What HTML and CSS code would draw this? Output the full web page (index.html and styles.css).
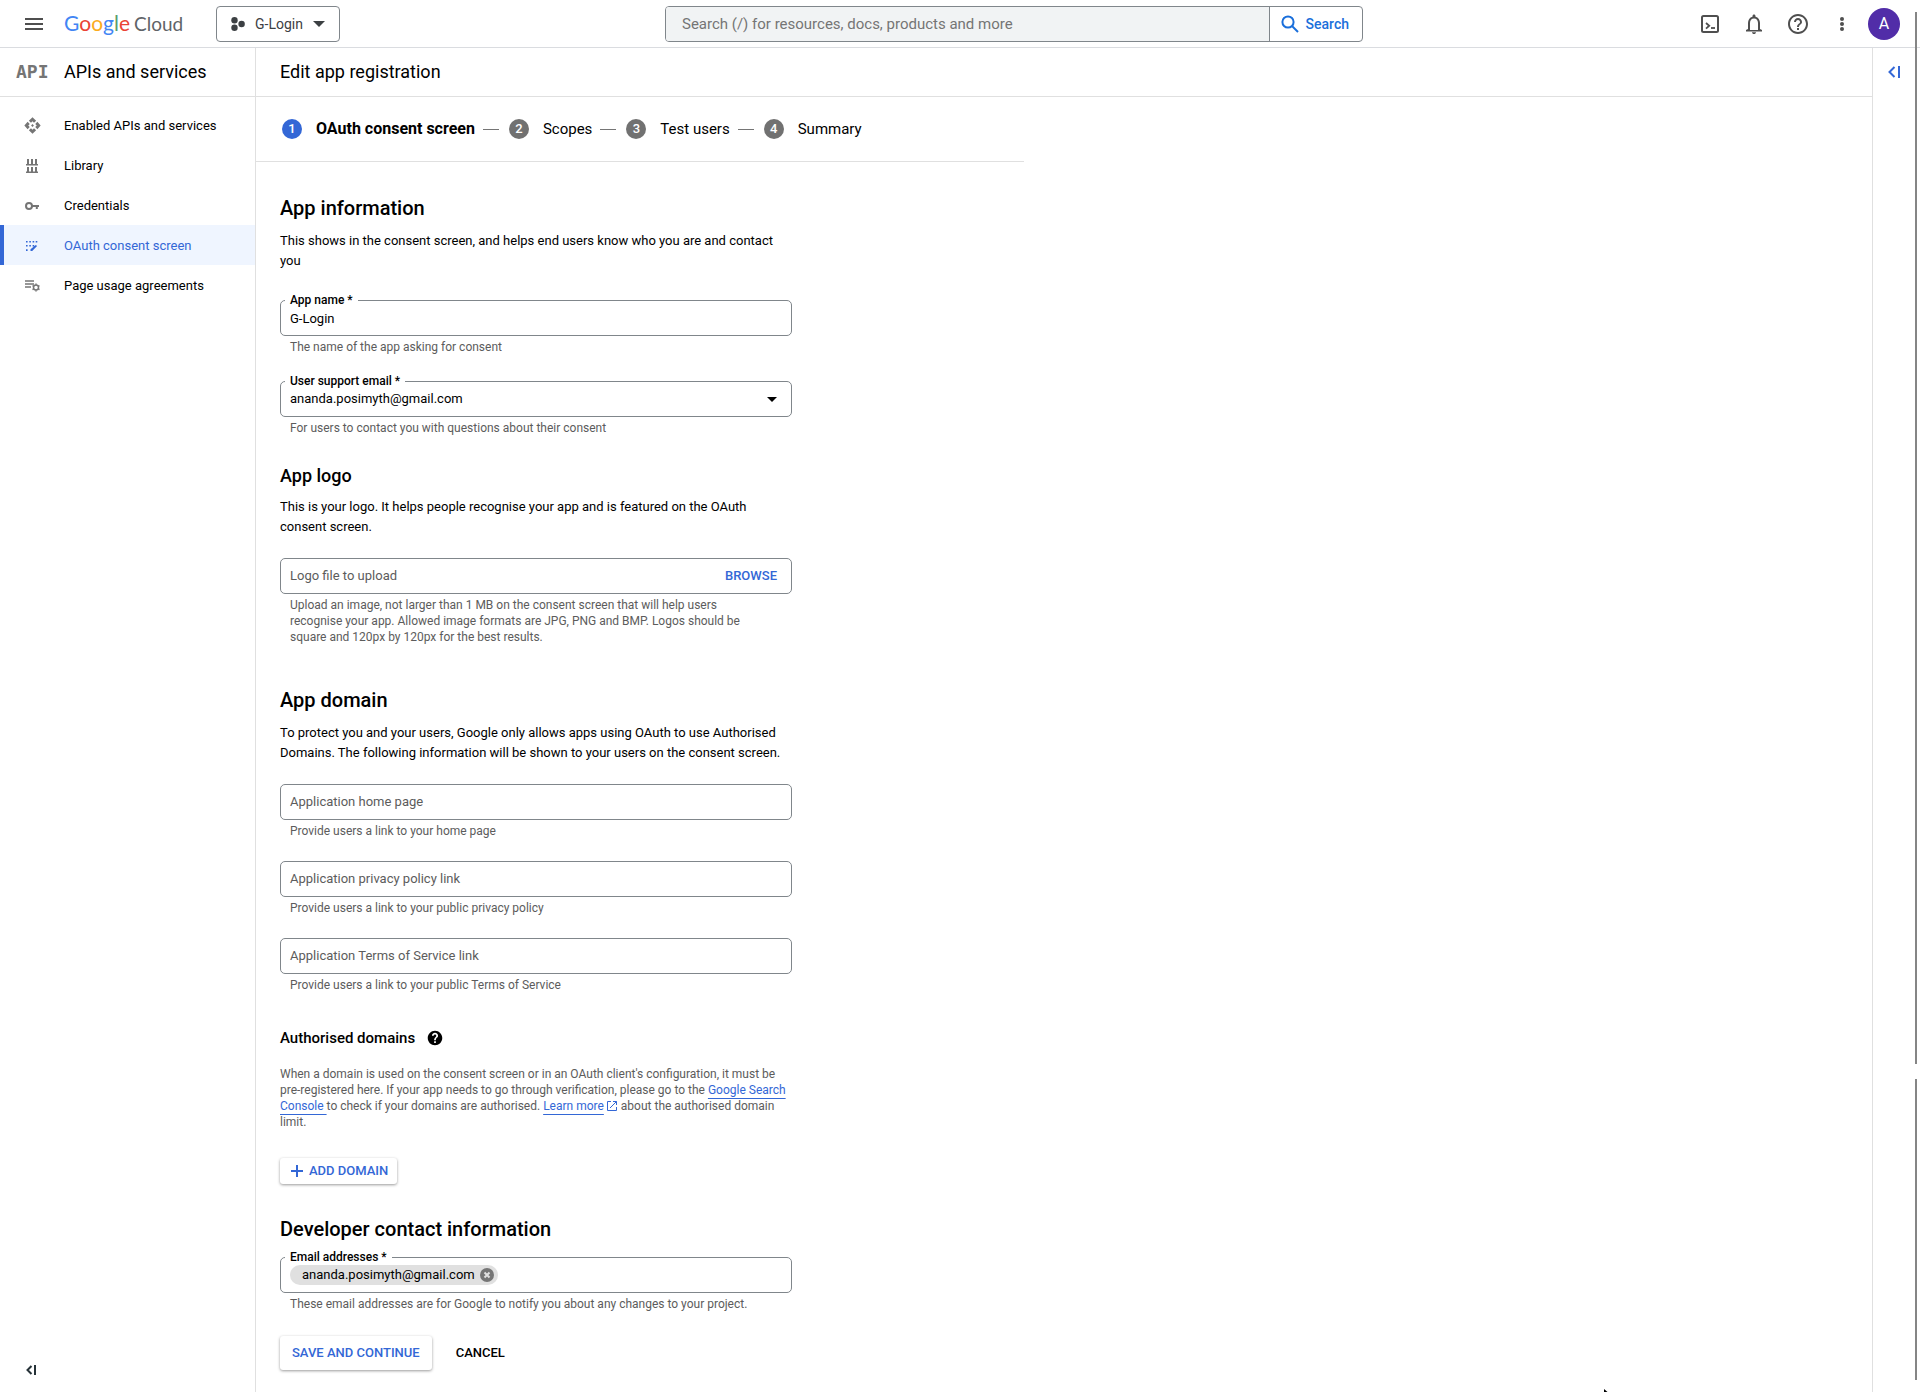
FILE: index.html
```html
<!DOCTYPE html>
<html lang="en-GB">
<head>
<meta charset="utf-8">
<meta name="viewport" content="width=device-width, initial-scale=1">
<title>Edit app registration – Google Cloud</title>
<link rel="stylesheet" href="styles.css">
</head>
<body>
<header class="topbar">
  <div class="topbar-left">
    <button class="icon-button" type="button" aria-label="Navigation menu">
      <svg width="18" height="12" viewBox="0 0 18 12" fill="currentColor"><path d="M0 0h18v2H0zM0 5h18v2H0zM0 10h18v2H0z"/></svg>
    </button>
    <a class="brand" href="#"><span class="brand-google"><span class="g-blue">G</span><span class="g-red">o</span><span class="g-yellow">o</span><span class="g-blue">g</span><span class="g-green">l</span><span class="g-red">e</span></span><span>Cloud</span></a>
    <button class="project" type="button">
      <svg width="14" height="14" viewBox="0 0 14 14" fill="currentColor"><circle cx="3.5" cy="3.2" r="3.2"/><circle cx="3.5" cy="10.8" r="3.2"/><circle cx="10.6" cy="7" r="3.2"/></svg>
      <span class="project-name">G-Login</span>
      <svg width="12" height="6" viewBox="0 0 12 6" fill="currentColor"><path d="M0 0h12L6 6z"/></svg>
    </button>
  </div>
  <form class="search" role="search">
    <input class="search-input" type="search" aria-label="Search" placeholder="Search (/) for resources, docs, products and more">
    <button class="search-button" type="button">
      <svg width="18" height="18" viewBox="0 0 18 18" fill="none" stroke="currentColor" stroke-width="2"><circle cx="7" cy="7" r="5.6"/><path d="M11 11l6 6"/></svg>
      Search
    </button>
  </form>
  <div class="topbar-right">
    <button class="icon-button" type="button" aria-label="Cloud Shell">
      <svg width="18" height="18" viewBox="0 0 18 18" fill="none" stroke="currentColor"><rect x="1" y="1" width="16" height="16" rx="1.5" stroke-width="2"/><path d="M5 8l3.2 2.8L5 13.600" stroke-width="1.800"/><path d="M10 13h4" stroke-width="1.800"/></svg>
    </button>
    <button class="icon-button" type="button" aria-label="Notifications">
      <svg width="24" height="24" viewBox="0 0 24 24" fill="currentColor"><path d="M18 17v-6c0-3.070-1.640-5.640-4.500-6.320V4c0-.83-.67-1.500-1.500-1.500s-1.500.67-1.500 1.500v.68C7.630 5.360 6 7.920 6 11v6l-2 1v1.500h16V18l-2-1zm-2 1H8v-7c0-2.480 1.510-4.500 4-4.500s4 2.020 4 4.500v7zM10 20.200h4c0 1-.9 1.800-2 1.800s-2-.8-2-1.800z"/></svg>
    </button>
    <button class="icon-button" type="button" aria-label="Help">
      <svg width="24" height="24" viewBox="0 0 24 24" fill="currentColor"><path d="M11 18h2v-2h-2v2zm1-16C6.480 2 2 6.480 2 12s4.480 10 10 10 10-4.480 10-10S17.520 2 12 2zm0 18c-4.410 0-8-3.590-8-8s3.590-8 8-8 8 3.590 8 8-3.590 8-8 8zm0-14c-2.210 0-4 1.790-4 4h2c0-1.100.9-2 2-2s2 .9 2 2c0 2-3 1.750-3 5h2c0-2.250 3-2.500 3-5 0-2.210-1.790-4-4-4z"/></svg>
    </button>
    <button class="icon-button" type="button" aria-label="More options">
      <svg width="4" height="14" viewBox="0 0 4 14" fill="currentColor"><circle cx="2" cy="2" r="2"/><circle cx="2" cy="7" r="2"/><circle cx="2" cy="12" r="2"/></svg>
    </button>
    <button class="avatar" type="button" aria-label="Account A">A</button>
  </div>
</header>

<div class="shell">
  <aside class="sidebar">
    <div class="section-bar sidebar-head">
      <span class="api-mark">API</span>
      <h2 class="bar-title">APIs and services</h2>
    </div>
    <nav class="nav">
      <a class="nav-item" href="#">
        <span class="nav-icon"><svg width="17" height="17" viewBox="0 0 24 24" fill="currentColor"><path d="M14 12l-2 2-2-2 2-2 2 2zm-2-6l2.120 2.120 3-3L12 .5 6.880 5.120l3 3L12 6zm-6 6l2.120-2.120-3-3L.5 12l4.620 5.120 3-3L6 12zm12 0l-2.120 2.120 3 3L23.500 12l-4.620-5.120-3 3L18 12zm-6 6l-2.120-2.120-3 3L12 23.500l5.120-4.620-3-3L12 18z"/></svg></span>
        Enabled APIs and services
      </a>
      <a class="nav-item" href="#">
        <span class="nav-icon"><svg width="12" height="14" viewBox="0 0 12 14" fill="currentColor"><path d="M1 0h2v5h2V0h2v5h2V0h2v5h1v1.500H0V5h1zM1 8h2v4.500h2V8h2v4.500h2V8h2v4.500h1V14H0v-1.500h1z"/></svg></span>
        Library
      </a>
      <a class="nav-item" href="#">
        <span class="nav-icon"><svg width="14" height="8" viewBox="0 0 14 8" fill="none" stroke="currentColor" stroke-width="2"><circle cx="4" cy="4" r="3"/><path d="M7 4h7M11.800 4v3"/></svg></span>
        Credentials
      </a>
      <a class="nav-item active" href="#" aria-current="page">
        <span class="nav-icon"><svg width="12" height="12" viewBox="0 0 12 12" fill="currentColor"><path d="M0 1h1.600v1.600H0zM3.300 1h1.600v1.600H3.300zM6.600 1h1.600v1.600H6.600zM9.700 1h1.600v1.600H9.700zM0 5h1.600v1.600H0zM3.300 5h1.600v1.600H3.300zM6.600 5h1.600v1.600H6.600zM0 9.300h1.600v1.600H0zM4.500 11V9.300L9.800 5l1.300 1L6.200 11z"/></svg></span>
        OAuth consent screen
      </a>
      <a class="nav-item" href="#">
        <span class="nav-icon"><svg width="15" height="12" viewBox="0 0 15 12" fill="none" stroke="currentColor"><path d="M0 1h9M0 4h9M0 7h6" stroke-width="1.400"/><circle cx="11" cy="7.600" r="2.500" stroke-width="1.500"/><path d="M11 3.600v1.200M11 10.400v1.200M7.500 5.600l1.100.6M13.400 9l1.100.6M7.500 9.600l1.100-.6M13.400 6.200l1.100-.6" stroke-width="1.500"/></svg></span>
        Page usage agreements
      </a>
    </nav>
    <button class="collapse" type="button" aria-label="Hide navigation menu">
      <svg width="10" height="10" viewBox="0 0 10 10" fill="none" stroke="currentColor" stroke-width="2"><path d="M5.500 1L1.500 5l4 4M9 0v10"/></svg>
    </button>
  </aside>

  <main class="content">
    <div class="section-bar content-head"><h1 class="bar-title">Edit app registration</h1></div>
    <ol class="steps">
      <li class="step current"><span class="step-dot">1</span>OAuth consent screen</li>
      <li class="step"><span class="step-dot">2</span>Scopes</li>
      <li class="step"><span class="step-dot">3</span>Test users</li>
      <li class="step"><span class="step-dot">4</span>Summary</li>
    </ol>

    <form class="form">
      <section class="group intro">
        <h2 class="title">App information</h2>
        <p class="lead">This shows in the consent screen, and helps end users know who you are and contact you</p>
        <div class="field floating">
          <div class="box">
            <label class="label" for="app-name">App name *</label>
            <input class="control" id="app-name" type="text" value="G-Login">
          </div>
          <p class="hint">The name of the app asking for consent</p>
        </div>
        <div class="field floating">
          <div class="box">
            <label class="label" for="support-email">User support email *</label>
            <select class="control" id="support-email"><option>ananda.posimyth@gmail.com</option></select>
            <svg class="caret" width="10" height="5" viewBox="0 0 10 5"><path d="M0 0h10L5 5z"/></svg>
          </div>
          <p class="hint">For users to contact you with questions about their consent</p>
        </div>
      </section>

      <section class="group">
        <h3 class="title subtitle">App logo</h3>
        <p class="lead">This is your logo. It helps people recognise your app and is featured on the OAuth consent screen.</p>
        <div class="field">
          <div class="box">
            <label class="label" for="logo-file">Logo file to upload</label>
            <input class="control" id="logo-file" type="text" readonly>
            <button class="browse" type="button">BROWSE</button>
          </div>
          <p class="hint">Upload an image, not larger than 1 MB on the consent screen that will help users recognise your app. Allowed image formats are JPG, PNG and BMP. Logos should be square and 120px by 120px for the best results.</p>
        </div>
      </section>

      <section class="group spaced">
        <h2 class="title">App domain</h2>
        <p class="lead">To protect you and your users, Google only allows apps using OAuth to use Authorised Domains. The following information will be shown to your users on the consent screen.</p>
        <div class="field">
          <div class="box">
            <label class="label" for="home-page">Application home page</label>
            <input class="control" id="home-page" type="url">
          </div>
          <p class="hint">Provide users a link to your home page</p>
        </div>
        <div class="field">
          <div class="box">
            <label class="label" for="privacy">Application privacy policy link</label>
            <input class="control" id="privacy" type="url">
          </div>
          <p class="hint">Provide users a link to your public privacy policy</p>
        </div>
        <div class="field">
          <div class="box">
            <label class="label" for="terms">Application Terms of Service link</label>
            <input class="control" id="terms" type="url">
          </div>
          <p class="hint">Provide users a link to your public Terms of Service</p>
        </div>
      </section>

      <section class="group domains">
        <h3 class="title small">Authorised domains
          <svg width="16" height="16" viewBox="1 1 22 22" fill="currentColor" role="img" aria-label="Help"><path d="M12 2C6.480 2 2 6.480 2 12s4.480 10 10 10 10-4.480 10-10S17.520 2 12 2zm1.200 17h-2.400v-2.400h2.400V19zm1.870-7.750l-.9.920C13.450 12.900 13.200 13.500 13.200 15h-2.400v-.5c0-1.100.45-2.100 1.170-2.830l1.240-1.260c.37-.36.590-.86.590-1.410 0-1-.8-1.800-1.800-1.800s-1.800.8-1.800 1.800H7.800c0-2.320 1.880-4.200 4.200-4.200s4.200 1.880 4.200 4.200c0 .88-.36 1.680-1.130 2.250z"/></svg>
        </h3>
        <p class="note">When a domain is used on the consent screen or in an OAuth client's configuration, it must be pre-registered here. If your app needs to go through verification, please go to the <a class="link" href="#">Google Search Console </a>to check if your domains are authorised. <a class="link" href="#">Learn more</a><svg class="external" width="10" height="10" viewBox="0 0 10 10" fill="none" stroke="currentColor"><path d="M4 .5H.5v9h9V6M6 .5h3.500V4M9.500.5L3 7"/></svg> about the authorised domain limit.</p>
        <button class="raised compact" type="button">
          <svg width="12" height="12" viewBox="0 0 12 12" fill="currentColor"><path d="M5 0h2v5h5v2H7v5H5V7H0V5h5z"/></svg>
          ADD DOMAIN
        </button>
      </section>

      <section class="group contact">
        <h2 class="title">Developer contact information</h2>
        <div class="field floating">
          <div class="box chips">
            <label class="label" for="emails">Email addresses *</label>
            <span class="chip">ananda.posimyth@gmail.com
              <button class="chip-remove" type="button" aria-label="Remove"><svg width="14" height="14" viewBox="0 0 14 14"><circle cx="7" cy="7" r="7" fill="currentColor"/><path d="M4.500 4.500l5 5M9.500 4.500l-5 5" stroke="#e0e0e0" stroke-width="2"/></svg></button>
            </span>
            <input class="control chip-input" id="emails" type="email">
          </div>
          <p class="hint">These email addresses are for Google to notify you about any changes to your project.</p>
        </div>
      </section>

      <div class="actions">
        <button class="raised" type="button">SAVE AND CONTINUE</button>
        <button class="flat" type="button">CANCEL</button>
      </div>
    </form>
  </main>

  <aside class="rail">
    <button class="rail-toggle" type="button" aria-label="Show help panel">
      <svg width="12" height="12" viewBox="0 0 12 12" fill="none" stroke="currentColor" stroke-width="2"><path d="M6.500 1L1.500 6l5 5M11 0v12"/></svg>
    </button>
  </aside>
</div>

<div class="scroll-marks" aria-hidden="true"><span class="mark mark-long"></span><span class="mark mark-short"></span></div>
<svg class="pointer" aria-hidden="true" width="4" height="3" viewBox="0 0 4 3"><path d="M0 0l3.500 3H0z"/></svg>
</body>
</html>
```
FILE: styles.css
```css
:root {
  --blue: #3367d6;
  --line: #e0e0e0;
  --outline: #80868b;
  --muted: #5c5c5c;
  --icon: #757575;
}

* { box-sizing: border-box; }

body {
  display: flex;
  flex-direction: column;
  min-height: 100vh;
  margin: 0;
  background: #fff;
  color: #000;
  font: 13px/20px Roboto, Arial, sans-serif;
}

h1, h2, h3, p, ol { margin: 0; padding: 0; }
a { color: inherit; text-decoration: none; }
svg { display: block; flex: none; }

button, input, select {
  margin: 0;
  padding: 0;
  border: 0;
  background: none;
  color: inherit;
  font: inherit;
}

/* Top bar */
.topbar {
  display: grid;
  grid-template-columns: 665fr minmax(0, 698px) 557fr;
  align-items: center;
  height: 48px;
  border-bottom: 1px solid #dadce0;
}

.topbar-left, .topbar-right { display: flex; align-items: center; }
.topbar-left { padding-left: 12px; }
.topbar-right { justify-content: flex-end; padding-right: 20px; }

.icon-button {
  display: flex;
  align-items: center;
  justify-content: center;
  width: 44px;
  height: 44px;
  color: #4f4f4f;
}

.brand {
  display: flex;
  align-items: baseline;
  gap: 4px;
  width: 151px;
  padding-left: 8px;
  color: #5f6368;
  font: 19px/26px Lato, sans-serif;
  white-space: nowrap;
}

.brand-google { font-size: 21px; }

.g-blue { color: #4285f4; }
.g-red { color: #ea4335; }
.g-yellow { color: #fbab1c; }
.g-green { color: #5a9e6b; }

.project {
  display: flex;
  align-items: center;
  gap: 10px;
  height: 36px;
  margin-left: 9px;
  padding: 0 14px;
  border: 1px solid var(--outline);
  border-radius: 4px;
  color: #3c4043;
  font-size: 14px;
}

.search {
  display: flex;
  height: 36px;
  border: 1px solid var(--outline);
  border-radius: 4px;
  overflow: hidden;
}

.search-input {
  flex: 1;
  min-width: 0;
  padding: 0 16px;
  background: #f1f3f4;
  font-size: 15px;
}

.search-input::placeholder { color: #757575; }

.search-button {
  display: flex;
  align-items: center;
  gap: 7px;
  padding: 0 13px 0 11px;
  border-left: 1px solid var(--outline);
  color: #1a6fdb;
  font-size: 14px;
  font-weight: 500;
}

.avatar {
  width: 32px;
  height: 32px;
  border-radius: 50%;
  margin-left: 4px;
  background: #512da8;
  color: #fff;
  font-size: 16px;
}

/* Page frame */
.shell { display: flex; flex: 1; }

.section-bar {
  display: flex;
  align-items: center;
  height: 49px;
  border-bottom: 1px solid var(--line);
}

.bar-title { font-size: 18px; font-weight: 400; line-height: 24px; }

.sidebar {
  display: flex;
  flex-direction: column;
  flex: 0 0 256px;
  border-right: 1px solid var(--line);
}

.sidebar-head { padding-left: 16px; }

.api-mark {
  width: 48px;
  color: var(--icon);
  font: bold 18px/24px "DejaVu Sans Mono", monospace;
}

.nav { flex: 1; padding-top: 8px; }

.nav-item {
  display: flex;
  align-items: center;
  height: 40px;
  padding-top: 1px;
  border-left: 4px solid transparent;
}

.nav-icon {
  display: flex;
  justify-content: center;
  width: 56px;
  margin-right: 4px;
  color: var(--icon);
}

.nav-item.active { border-color: var(--blue); background: #eff5ff; color: var(--blue); }
.nav-item.active .nav-icon { color: inherit; }

.collapse {
  align-self: flex-start;
  margin-left: 16px;
  padding: 10px;
  margin-bottom: 9px;
  color: #263238;
}

.content { flex: 1; min-width: 0; }
.content-head { padding-left: 24px; }

.rail { flex: 0 0 48px; border-left: 1px solid var(--line); }

.rail-toggle { display: flex; padding: 18px 15px; color: var(--blue); }

/* Stepper */
.steps {
  display: flex;
  align-items: center;
  max-width: 768px;
  height: 65px;
  padding-left: 26px;
  border-bottom: 1px solid var(--line);
  font-size: 15px;
  list-style: none;
}

.step { display: flex; align-items: center; }

.step + .step::before {
  width: 16px;
  height: 1px;
  margin: 0 10px 0 8px;
  background: var(--icon);
  content: "";
}

.step-dot {
  width: 20px;
  height: 20px;
  margin-right: 14px;
  border-radius: 50%;
  background: #717171;
  color: #fff;
  font-size: 13px;
  font-weight: 500;
  text-align: center;
}

.step.current { font-size: 16px; font-weight: 700; }
.step.current .step-dot { background: var(--blue); }

/* Form */
.form { max-width: 560px; padding: 34px 24px 24px; }

.title { font-size: 20px; font-weight: 500; line-height: 24px; }
.title.subtitle { font-size: 18px; line-height: 20px; }

.title.small {
  display: flex;
  align-items: center;
  gap: 12px;
  font-size: 15px;
}

.lead { margin: 11px 0 21px; }
.intro .lead { margin-bottom: 29px; }

.group { margin-bottom: 30px; }
.group.spaced { padding-top: 13px; }
.group.domains, .group.contact { padding-top: 3px; }

.field { margin-bottom: 22px; }
.field.floating { margin-bottom: 26px; }

.box {
  position: relative;
  display: grid;
  grid-template-columns: 1fr auto;
  align-items: center;
  height: 36px;
  border: 1px solid var(--outline);
  border-radius: 5px;
}

.label {
  grid-area: 1 / 1;
  padding-left: 9px;
  color: var(--muted);
  pointer-events: none;
}

.control {
  grid-area: 1 / 1 / 2 / -1;
  width: 100%;
  min-width: 0;
  height: 34px;
  padding: 0 9px;
  appearance: none;
  outline: 0;
}

.floating .label {
  position: absolute;
  top: -9px;
  left: 4px;
  padding: 0 5px;
  background: #fff;
  color: #000;
  font-size: 12px;
  font-weight: 500;
  line-height: 16px;
}

.caret { grid-area: 1 / 2; margin-right: 14px; pointer-events: none; }

.browse {
  grid-area: 1 / 2;
  margin-right: 14px;
  color: var(--blue);
  font-weight: 500;
}

.hint {
  padding: 3px 24px 0 10px;
  color: var(--muted);
  font-size: 12px;
  line-height: 16px;
}

.note {
  margin: 16px 0 28px;
  color: var(--muted);
  font-size: 12px;
  line-height: 16px;
}

.link {
  color: var(--blue);
  text-decoration: underline 1px;
  text-decoration-skip-ink: none;
  text-underline-offset: 4px;
}

.external {
  display: inline-block;
  margin: 0 1px 0 3px;
  color: var(--blue);
  vertical-align: -1px;
}

.raised {
  display: flex;
  align-items: center;
  gap: 6px;
  height: 34px;
  padding: 0 12px;
  border-radius: 3px;
  box-shadow: 0 1px 3px rgba(0, 0, 0, .4);
  color: var(--blue);
  font-weight: 500;
}

.raised.compact { height: 26px; padding: 0 9px 0 11px; }

.chips { display: flex; }

.chip {
  display: flex;
  align-items: center;
  gap: 5px;
  height: 20px;
  margin-left: 9px;
  padding: 0 4px 0 12px;
  border-radius: 10px;
  background: #e0e0e0;
  white-space: nowrap;
}

.chip-remove { color: #757575; }
.chip-input { flex: 1; }

.group.contact { margin-bottom: 24px; }
.contact .title { margin-bottom: 16px; }
.contact .field { margin-bottom: 0; }

.actions { display: flex; align-items: center; gap: 24px; }
.flat { font-weight: 500; }

/* Overlay scroll indicators along the window edge */
.scroll-marks {
  position: fixed;
  top: 12px;
  right: 3px;
  bottom: 12px;
  display: flex;
  flex-direction: column;
  gap: 15px;
  width: 2px;
  pointer-events: none;
}

.mark { background: #858585; }
.mark-long { flex: 7; }
.mark-short { flex: 2; }

.pointer { position: fixed; right: 312px; bottom: 0; }
```
